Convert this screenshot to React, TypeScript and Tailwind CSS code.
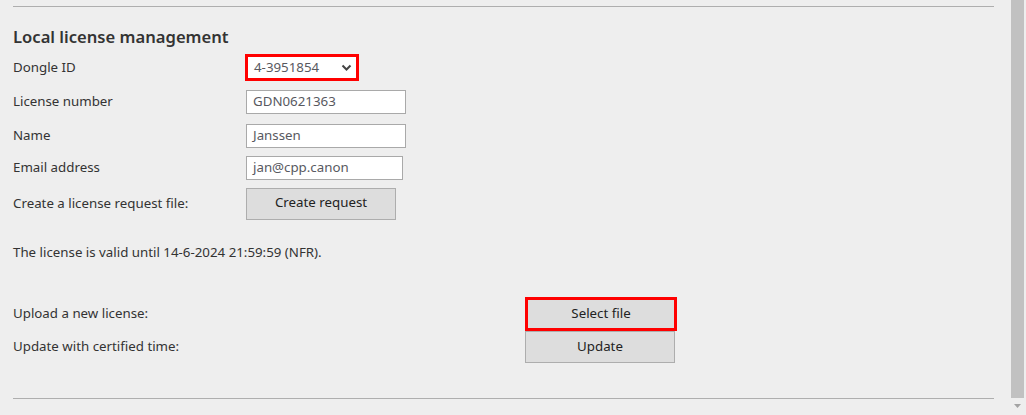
import React from "react";

const font = { fontFamily: '"Segoe UI", "Noto Sans", sans-serif' };

function Field({ value, width }: { value: string; width: string }) {
    return (
        <div
            className={`${width} h-[24px] bg-white border border-[#a9a9a9] px-[6px] flex items-center text-[#58595f]`}
        >
            {value}
        </div>
    );
}

export default function App() {
    return (
        <div className="w-full h-[415px] bg-[#eeeeee] flex overflow-hidden text-[#333]" style={font}>
            {/* page */}
            <div className="flex-1 flex flex-col pl-[13px] pr-[17px]">
                <div className="mt-[6px] border-t border-[#aeaeae]" />

                <h2 className="mt-[18px] h-[24px] leading-[24px] text-[16.6px] font-semibold text-[#333]">
                    Local license management
                </h2>

                <div className="mt-[5px] flex flex-col text-[13.3px]">
                    {/* Dongle ID */}
                    <div className="flex items-center h-[27px]">
                        <span className="w-[232px]">Dongle ID</span>
                        <div className="w-[114px] h-[27px] bg-white border-[3px] border-[#ff0000] pl-[6px] pr-[4px] flex items-center justify-between text-[#58595f]">
                            <span>4-3951854</span>
                            <svg width="11" height="7" viewBox="0 0 11 7">
                                <polyline points="1.5,1.5 5.5,5.5 9.5,1.5" fill="none" stroke="#444" strokeWidth="2" />
                            </svg>
                        </div>
                    </div>

                    <div className="flex items-center h-[24px] mt-[9px]">
                        <span className="w-[233px]">License number</span>
                        <Field value="GDN0621363" width="w-[160px]" />
                    </div>

                    <div className="flex items-center h-[24px] mt-[10px]">
                        <span className="w-[233px]">Name</span>
                        <Field value="Janssen" width="w-[160px]" />
                    </div>

                    <div className="flex items-center h-[24px] mt-[8px]">
                        <span className="w-[233px]">Email address</span>
                        <Field value="jan@cpp.canon" width="w-[157px]" />
                    </div>

                    <div className="flex items-center h-[32px] mt-[8px]">
                        <span className="w-[233px]">Create a license request file:</span>
                        <button className="w-[150px] h-[32px] bg-[#dddddd] border border-[#adadad] text-[#222] pb-[2px]">
                            Create request
                        </button>
                    </div>

                    <p className="mt-[22px] h-[20px] leading-[20px]">
                        The license is valid until 14-6-2024 21:59:59 (NFR).
                    </p>

                    <div className="flex items-center h-[34px] mt-[35px]">
                        <span className="w-[512px]">Upload a new license:</span>
                        <button className="w-[152px] h-[34px] bg-[#dddddd] border-[3px] border-[#ff0000] text-[#222]">
                            Select file
                        </button>
                    </div>

                    <div className="flex items-center h-[32px]">
                        <span className="w-[512px]">Update with certified time:</span>
                        <button className="w-[150px] h-[32px] bg-[#dddddd] border border-[#adadad] text-[#222]">
                            Update
                        </button>
                    </div>
                </div>

                <div className="mt-[35px] border-t border-[#aeaeae]" />
            </div>

            {/* scrollbar */}
            <div className="w-[15px] flex flex-col">
                <div className="h-[398px] w-[13px] bg-[#c1c1c1]" />
                <div className="flex-1 flex items-center justify-center pr-[2px]">
                    <svg width="7" height="5" viewBox="0 0 7 5">
                        <polygon points="0,0 7,0 3.5,4" fill="#a3a3a3" />
                    </svg>
                </div>
            </div>
        </div>
    );
}
